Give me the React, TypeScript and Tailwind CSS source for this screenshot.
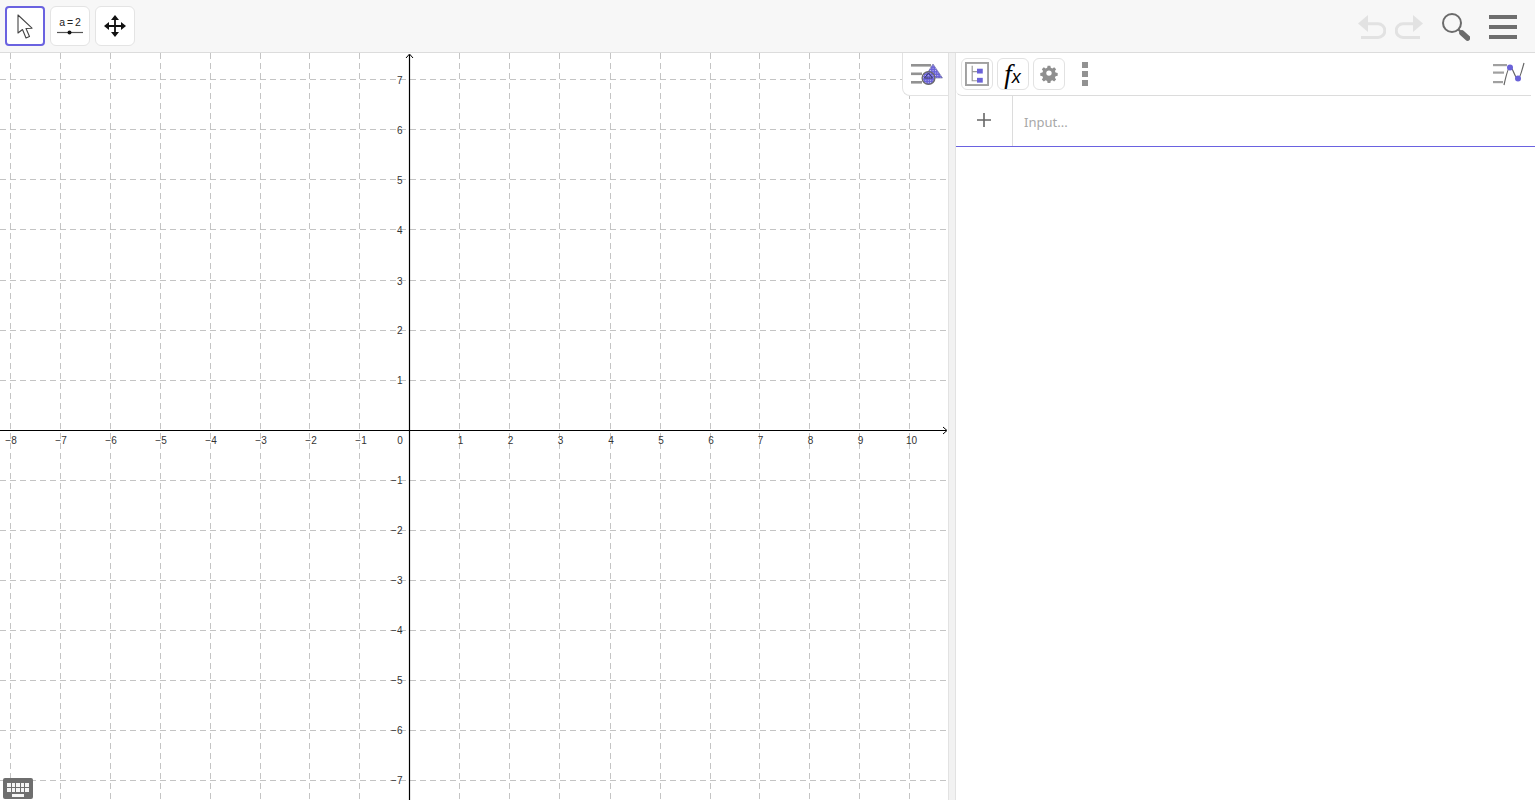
const xCols: [number, number, number][] = [[-8,10,1],[-7,60,1],[-6,110,1],[-5,160,1],[-4,210,1],[-3,260,1],[-2,309,2],[-1,359,2],[1,459,1.5],[2,509,1.5],[3,559,1.5],[4,610,1],[5,660,1],[6,710,1],[7,759,1.5],[8,809,1.5],[9,859,1.5],[10,909,2.5]];
const yRows: [number, number][] = [[7,79],[6,129],[5,179],[4,229],[3,280],[2,330],[1,380],[-1,480],[-2,530],[-3,580],[-4,630],[-5,680],[-6,730],[-7,780]];
const fmt = (n: number) => (n < 0 ? `\u2212${-n}` : `${n}`);

function Graph() {
  return (
    <svg width="948" height="747" viewBox="0 53 948 747" className="block" fontFamily="'Liberation Sans', sans-serif">
      {xCols.map(([n, x]) => (
        <line key={n} x1={x + 0.5} x2={x + 0.5} y1={53} y2={800} stroke="#c4c4c4" strokeWidth="1" strokeDasharray="6 4" />
      ))}
      {yRows.map(([n, y]) => (
        <line key={n} x1={0} x2={948} y1={y + 0.5} y2={y + 0.5} stroke="#c4c4c4" strokeWidth="1" strokeDasharray="6 4" />
      ))}
      <line x1={0} x2={946} y1={430.5} y2={430.5} stroke="#000" strokeWidth="1.2" />
      <line x1={409.5} x2={409.5} y1={55} y2={800} stroke="#000" strokeWidth="1.2" />
      <path d="M943 427 L947 430.5 L943 434" fill="none" stroke="#000" strokeWidth="1" />
      <path d="M406 58 L409.5 54 L413 58" fill="none" stroke="#000" strokeWidth="1" />
      {xCols.map(([n, x, d]) => (
        <text key={n} x={x + d} y={444} fontSize="10" fill="#333" textAnchor="middle">{fmt(n)}</text>
      ))}
      <text x={400} y={444} fontSize="10" fill="#333" textAnchor="middle">0</text>
      {yRows.map(([n, y]) => (
        <text key={n} x={402.5} y={y + (n >= 3 ? 4.5 : 3.5)} fontSize="10" fill="#333" textAnchor="end">{fmt(n)}</text>
      ))}
    </svg>
  );
}

function Keyboard() {
  const cell = "bg-[#f4f4f4] h-[4px] w-[3.6px]";
  return (
    <div className="absolute left-[3px] top-[778px] w-[30px] h-[21px] bg-[#6e6e6e] rounded-[2px] flex flex-col items-center justify-center gap-[1px] pt-[2px]">
      <div className="flex gap-[1px]">{[0,1,2,3,4].map((i) => <div key={i} className={cell} />)}</div>
      <div className="flex gap-[1px]">{[0,1,2,3,4].map((i) => <div key={i} className={cell} />)}</div>
      <div className="bg-[#f4f4f4] h-[3px] w-[12px] mt-[1px]" />
    </div>
  );
}

function ToolBtn({ active, children }: { active?: boolean; children: React.ReactNode }) {
  return (
    <div className={active
      ? "w-[40px] h-[40px] rounded-[4px] border-2 border-[#6a62e0] bg-white flex items-center justify-center"
      : "w-[40px] h-[40px] rounded-[6px] border border-[#e4e4e4] bg-white flex items-center justify-center"}>
      {children}
    </div>
  );
}

function SmallBtn({ children }: { children: React.ReactNode }) {
  return <div className="w-[32px] h-[32px] rounded-[6px] border border-[#e2e2e2] bg-white flex items-center justify-center">{children}</div>;
}

function Dots({ id }: { id: string }) {
  return (
    <pattern id={id} width="2.4" height="2.4" patternUnits="userSpaceOnUse">
      <rect width="2.4" height="2.4" fill="#6a62d8" />
      <rect width="0.9" height="0.9" fill="#d8d6f6" />
    </pattern>
  );
}

export default function App() {
  return (
    <div className="relative w-[1535px] h-[800px] bg-white overflow-hidden font-['Liberation_Sans',sans-serif]">
      <header className="h-[53px] bg-[#f7f7f7] border-b border-[#dcdcdc] flex items-center pl-[5px] pr-[18px] gap-[5px]">
        <ToolBtn active>
          <svg width="16" height="25" viewBox="0 0 16 25">
            <path d="M1 1 L1 19 L5.5 15.5 L9 24 L12.5 22.5 L9 14.5 L15 14.2 Z" fill="#fff" stroke="#444" strokeWidth="1.1" strokeLinejoin="round" />
          </svg>
        </ToolBtn>
        <ToolBtn>
          <div className="flex flex-col items-center -mt-[1px]">
            <span className="text-[10.5px] leading-[12px] text-[#222] [word-spacing:-1px]">a = 2</span>
            <svg width="26" height="7" viewBox="0 0 26 7" className="mt-[1px]">
              <line x1="0" x2="26" y1="3.5" y2="3.5" stroke="#555" strokeWidth="1.2" />
              <circle cx="12.5" cy="3.5" r="2" fill="#111" />
            </svg>
          </div>
        </ToolBtn>
        <ToolBtn>
          <svg width="22" height="22" viewBox="0 0 22 22" fill="#111">
            <path d="M10.1 3 h1.8 v16 h-1.8 z M3 10.1 h16 v1.8 h-16 z" />
            <path d="M11 0 L15 5 H7 Z M11 22 L7 17 H15 Z M0 11 L5 7 V15 Z M22 11 L17 15 V7 Z" />
          </svg>
        </ToolBtn>
        <div className="flex-1" />
        <div className="flex items-center mt-[1px]">
          <svg width="28" height="24" viewBox="0 0 28 24">
            <path d="M0 8.5 L10 0 V17 Z" fill="#e2e2e2" />
            <path d="M9 8.8 H20 a6.8 6.8 0 0 1 0 13.6 H3" fill="none" stroke="#e2e2e2" strokeWidth="3" />
          </svg>
          <svg width="28" height="24" viewBox="0 0 28 24" className="ml-[9px]">
            <path d="M28 8.5 L18 0 V17 Z" fill="#e2e2e2" />
            <path d="M19 8.8 H8 a6.8 6.8 0 0 0 0 13.6 H25" fill="none" stroke="#e2e2e2" strokeWidth="3" />
          </svg>
          <svg width="28" height="28" viewBox="0 0 28 28" className="ml-[19px]">
            <circle cx="10" cy="10" r="9" fill="none" stroke="#6b6b6b" strokeWidth="2" />
            <path d="M16 16 L19 19" stroke="#6b6b6b" strokeWidth="2.2" />
            <path d="M20 20 L25.5 25" stroke="#6b6b6b" strokeWidth="5.6" strokeLinecap="round" />
          </svg>
          <div className="ml-[19px] w-[28px] flex flex-col gap-[6px]">
            <div className="h-[4px] bg-[#6e6e6e]" />
            <div className="h-[4px] bg-[#6e6e6e]" />
            <div className="h-[4px] bg-[#6e6e6e]" />
          </div>
        </div>
      </header>

      <main className="flex h-[747px]">
        <section className="relative w-[948px] bg-white">
          <Graph />
          <div className="absolute right-0 top-0 w-[46px] h-[43px] bg-white border-l border-b border-[#e2e2e2] rounded-bl-[8px] flex items-center justify-center pl-[2px]">
            <svg width="32" height="23" viewBox="0 0 32 23">
              <defs><Dots id="dotsA" /></defs>
              <rect x="0" y="1" width="20" height="2.6" fill="#929292" />
              <rect x="0" y="9.5" width="11" height="2.6" fill="#929292" />
              <rect x="0" y="18" width="11" height="2.6" fill="#929292" />
              <path d="M22 1 L31.5 15 H13 Z" fill="url(#dotsA)" stroke="#6d6d9a" strokeWidth="0.6" />
              <circle cx="17.5" cy="15" r="6.4" fill="url(#dotsA)" stroke="#6a6a6a" strokeWidth="1.3" />
              <path d="M17.5 10 L21.5 15 H13.5 Z" fill="none" stroke="#33335a" strokeWidth="0.9" />
            </svg>
          </div>
        </section>

        <div className="w-[8px] bg-[#f2f2f2] border-x border-[#e2e2e2]" />

        <section className="flex-1 flex flex-col">
          <div className="h-[43px] mr-[4px] border-b border-[#dcdcdc] rounded-bl-[6px] flex items-center pl-[5px] pr-[5px] gap-[4px]">
            <SmallBtn>
              <svg width="24" height="24" viewBox="0 0 25 25">
                <rect x="1" y="1" width="23" height="23" fill="#fff" stroke="#a0a0a0" strokeWidth="2" />
                <path d="M7.5 4 V19.5 H13 M7.5 10 H13" fill="none" stroke="#999" strokeWidth="1.2" />
                <rect x="12.5" y="7" width="6" height="5" fill="#6a62d8" />
                <rect x="12.5" y="16.5" width="6" height="5" fill="#6a62d8" />
              </svg>
            </SmallBtn>
            <SmallBtn>
              <span className="text-black leading-none flex items-end -ml-[1px]">
                <span className="font-['Liberation_Serif',serif] italic text-[27px] leading-none">f</span>
                <span className="font-['Liberation_Sans',sans-serif] italic text-[18px] leading-[21px]">x</span>
              </span>
            </SmallBtn>
            <SmallBtn>
              <svg width="18" height="18" viewBox="0 0 24 24" fill="#8f8f8f">
                <path fillRule="evenodd" d="M10 1 h4 l.7 3.2 2.2.9 2.8-1.8 2.9 2.9-1.8 2.8.9 2.2 3.2.7 v4 l-3.2.7-.9 2.2 1.8 2.8-2.9 2.9-2.8-1.8-2.2.9-.7 3.2 h-4 l-.7-3.2-2.2-.9-2.8 1.8-2.9-2.9 1.8-2.8-.9-2.2-3.2-.7 v-4 l3.2-.7.9-2.2-1.8-2.8 2.9-2.9 2.8 1.8 2.2-.9 Z M12 8 a4 4 0 1 0 0 8 a4 4 0 0 0 0-8 Z" transform="scale(0.9) translate(1.3 0)" />
              </svg>
            </SmallBtn>
            <div className="ml-[13px] flex flex-col gap-[3px]">
              <div className="w-[6px] h-[6px] bg-[#929292]" />
              <div className="w-[6px] h-[6px] bg-[#929292]" />
              <div className="w-[6px] h-[6px] bg-[#929292]" />
            </div>
            <div className="flex-1" />
            <svg width="32" height="24" viewBox="0 0 32 24" className="mr-[1px]">
              <rect x="0" y="2" width="14" height="2.2" fill="#a0a0a0" />
              <rect x="0" y="9.5" width="11" height="2.2" fill="#a0a0a0" />
              <rect x="0" y="19" width="10" height="2.2" fill="#a0a0a0" />
              <path d="M11 23 C13 14 15 5 17 5 C20 5 22 17 25 17 C27 17 29 8 31 1" fill="none" stroke="#666" strokeWidth="1.2" />
              <circle cx="17" cy="5.5" r="3" fill="#6a62d8" />
              <circle cx="25" cy="16.5" r="3" fill="#6a62d8" />
            </svg>
          </div>
          <div className="h-[51px] border-b border-[#6a62e0] flex">
            <div className="w-[57px] border-r border-[#dcdcdc] flex items-center justify-center pb-[2px]">
              <svg width="16" height="16" viewBox="0 0 16 16">
                <path d="M8 1 V15 M1 8 H15" stroke="#666" strokeWidth="1.6" />
              </svg>
            </div>
            <div className="flex-1 flex items-center pl-[11px] pt-[3px] text-[13px] text-[#a8a8a8] font-['Noto_Sans',sans-serif]">Input...</div>
          </div>
        </section>
      </main>
      <Keyboard />
    </div>
  );
}
